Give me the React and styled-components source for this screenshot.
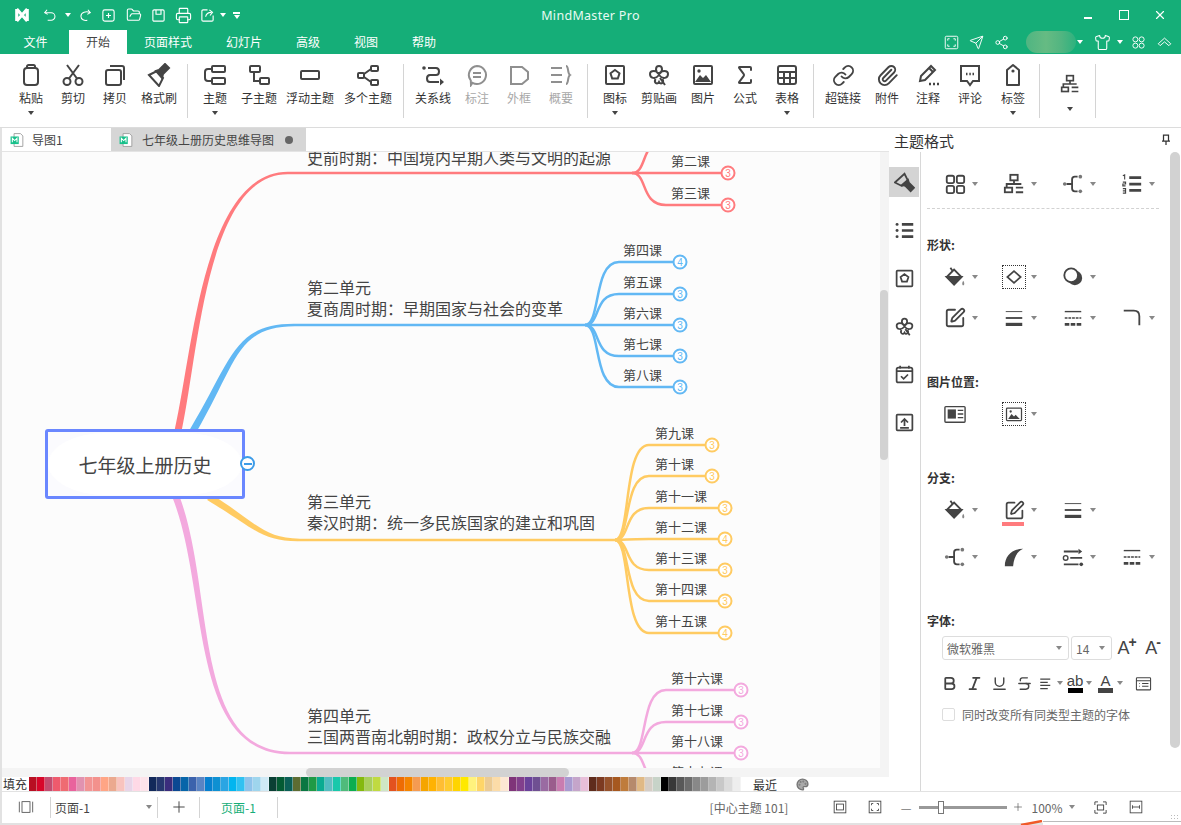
import React from "react"
import styled, { createGlobalStyle } from "styled-components"
import {
    Sigma, Link as LinkIcon, Send, Share2, Shirt,
    X, SquarePen, Bold, Italic, Underline, Strikethrough, Palette, Plus, Printer, FolderOpen, Paperclip,
} from "lucide-react"

const INK = "#444"
const GREEN = "#15ae78"
const FONT = `"Noto Sans CJK SC", "Liberation Sans", sans-serif`

const Global = createGlobalStyle`
html, body { margin: 0; padding: 0; overflow: hidden; background: #fff; }
body { font-family: ${FONT}; color: ${INK}; font-size: 12px; }
* { box-sizing: border-box; }
`

const Window = styled.div`
width: 1181px;
height: 825px;
display: flex;
flex-direction: column;
overflow: hidden;
`

const TitleBar = styled.div`
height: 30px;
background: ${GREEN};
color: #fff;
display: grid;
grid-template-columns: 1fr auto 1fr;
align-items: center;
`

const QuickTools = styled.div`
display: flex;
align-items: center;
padding-left: 12px;
`

const QuickBtn = styled.div`
width: ${p => p.$w || 25}px;
margin-left: ${p => p.$ml || 0}px;
display: flex;
flex-direction: column;
gap: 1px;
align-items: center;
justify-content: center;
color: #fff;
`

const OverflowBar = styled.div`
width: 7px;
height: 2px;
background: #fff;
`

const AppTitle = styled.div`
font-size: 12.5px;
letter-spacing: 0.3px;
color: #e8fbf3;
font-family: "Noto Sans", sans-serif;
`

const WinControls = styled.div`
display: flex;
justify-content: flex-end;
align-items: center;
padding-right: 3px;
`

const WinBtn = styled.div`
width: 36px;
display: flex;
justify-content: center;
`

const MinBar = styled.div`
width: 8px;
height: 2px;
margin-top: 6px;
background: #fff;
`

const MaxBox = styled.div`
width: 10px;
height: 10px;
border: 1.5px solid #fff;
`

const MenuBar = styled.div`
height: 24px;
background: ${GREEN};
display: flex;
padding-left: 2px;
color: #fff;
`

const MenuTab = styled.div`
width: ${p => p.$w || 58}px;
text-align: center;
line-height: 24px;
font-size: 12px;
background: ${p => (p.$active ? "#fff" : "transparent")};
color: ${p => (p.$active ? INK : "#fff")};
`

const MenuRight = styled.div`
margin-left: auto;
padding-right: 6px;
display: flex;
align-items: center;
`

const BlurName = styled.div`
width: 50px;
height: 22px;
margin: 0 1px 0 12px;
border-radius: 11px;
background: linear-gradient(90deg, #4fb582, #66bb83 40%, #52b581 70%, #2eb17e);
`

const Caret = styled.span`
display: inline-block;
width: 0;
height: 0;
border-left: 3.5px solid transparent;
border-right: 3.5px solid transparent;
border-top: 4px solid ${p => p.$color || INK};
`

const Ribbon = styled.div`
height: 74px;
display: flex;
align-items: flex-start;
background: #fff;
padding-left: 10px;
border-bottom: 1px solid #dcdcdc;
`

const ToolBtn = styled.div`
width: ${p => p.$w || 42}px;
height: 64px;
padding-top: 9px;
display: flex;
flex-direction: column;
align-items: center;
color: ${p => (p.$off ? "#8f8f8f" : INK)};
`

const ToolIcon = styled.div`
height: 24px;
display: flex;
align-items: center;
justify-content: center;
`

const ToolLabel = styled.div`
margin-top: 2px;
line-height: 18px;
font-size: 12px;
white-space: nowrap;
color: ${p => (p.$off ? "#a8a8a8" : "#333")};
`

const ToolArrow = styled.div`
line-height: 0;
margin-top: 3px;
`

const LayoutBtn = styled.div`
width: 48px;
height: 64px;
padding-top: 20px;
display: flex;
flex-direction: column;
align-items: center;
gap: 13px;
`

const RibbonSep = styled.div`
width: 1px;
height: 54px;
margin: 10px 6px 0 ${p => (p.$l === undefined ? 5 : p.$l)}px;
background: #d4d4d4;
`

const Workspace = styled.div`
height: 663px;
display: flex;
`

const LeftCol = styled.div`
width: 889px;
border-left: 2px solid #e2e2e2;
display: flex;
flex-direction: column;
`

const DocTabs = styled.div`
height: 24px;
display: flex;
border-bottom: 1px solid #e4e4e4;
`

const DocTab = styled.div`
width: ${p => p.$w}px;
height: 23px;
display: flex;
align-items: center;
gap: ${p => p.$gap}px;
padding-left: 8px;
background: ${p => (p.$active ? "#d6d6d6" : "#fff")};
color: #444;
font-size: 12px;
`

const DirtyDot = styled.span`
width: 8px;
height: 8px;
border-radius: 50%;
background: #666;
margin-left: 2px;
`

const CanvasRow = styled.div`
height: 625px;
display: flex;
`

const CanvasCol = styled.div`
width: 878px;
display: flex;
flex-direction: column;
`

const Canvas = styled.div`
position: relative;
height: 616px;
overflow: hidden;
background: #fcfcfc;
`

const MapLines = styled.svg`
position: absolute;
left: 0;
top: 0;
`

const CountText = styled.text`
font-family: "Liberation Sans", sans-serif;
font-size: 10px;
text-anchor: middle;
`

const Unit = styled.div`
position: absolute;
left: ${p => p.$x - 2}px;
top: ${p => p.$y - 152}px;
font-size: 16px;
line-height: 21px;
white-space: nowrap;
color: #444;
`

const Lesson = styled.div`
position: absolute;
left: ${p => p.$x - 2}px;
top: ${p => p.$y - 173}px;
font-size: 13px;
line-height: 18px;
white-space: nowrap;
color: #444;
`

const Central = styled.div`
position: absolute;
left: 43px;
top: 277px;
width: 200px;
height: 70px;
border: 3px solid #6a87ff;
border-radius: 3px;
background: #fbfbfe;
padding: 1px 0;
`

const CentralInner = styled.div`
height: 100%;
border-radius: 60px / 32px;
background: #fff;
display: flex;
align-items: center;
justify-content: center;
font-size: 19px;
color: #444;
`

const Collapse = styled.div`
position: absolute;
left: 238px;
top: 304px;
width: 15px;
height: 15px;
border-radius: 50%;
border: 2px solid #3d9ce8;
background: #fff;
display: flex;
align-items: center;
justify-content: center;
&::after {
    content: "";
    width: 8px;
    height: 2px;
    background: #3d9ce8;
}
`

const HScroll = styled.div`
height: 9px;
background: #f4f4f4;
padding-left: 304px;
`

const HThumb = styled.div`
width: 263px;
height: 9px;
border-radius: 5px;
background: #d2d2d2;
`

const VScroll = styled.div`
width: 9px;
background: #f4f4f4;
padding-top: 138px;
`

const VThumb = styled.div`
width: 8px;
height: 170px;
border-radius: 4px;
background: #d2d2d2;
`

const ColorStrip = styled.div`
height: 14px;
display: flex;
align-items: center;
background: #fff;
`

const FillLabel = styled.div`
width: 27px;
padding-left: 1px;
font-size: 12px;
line-height: 14px;
color: #333;
`

const Swatch = styled.div`
width: 8px;
height: 14px;
background: ${p => p.$c};
border-right: 1px solid rgba(255, 255, 255, 0.35);
`

const RecentLabel = styled.div`
margin-left: 12px;
width: 43px;
font-size: 12px;
color: #333;
`

const Panel = styled.div`
width: 292px;
display: flex;
flex-direction: column;
background: #fff;
`

const PanelHead = styled.div`
height: 24px;
display: flex;
align-items: center;
justify-content: space-between;
padding: 0 9px 0 5px;
font-size: 15px;
color: #333;
`

const PanelBody = styled.div`
height: 639px;
display: flex;
`

const Rail = styled.div`
width: 32px;
padding-top: 15px;
display: flex;
flex-direction: column;
gap: 18px;
border-right: 1px solid #d8d8d8;
`

const RailTab = styled.div`
width: 30px;
height: 30px;
display: flex;
align-items: center;
justify-content: center;
background: ${p => (p.$active ? "#d4d4d4" : "transparent")};
`

const Format = styled.div`
width: 249px;
padding: 17px 0 0 6px;
`

const FormatRow = styled.div`
height: 30px;
margin-top: ${p => p.$top || 0}px;
display: flex;
`

const FormatCell = styled.div`
width: 59px;
height: 30px;
padding-left: 16px;
display: flex;
align-items: center;
`

const CellIcon = styled.div`
position: relative;
width: 24px;
height: 24px;
display: flex;
align-items: center;
justify-content: center;
margin-right: 5px;
outline: ${p => (p.$dotted ? "1px dotted #333" : "none")};
outline-offset: -1px;
`

const ColorBar = styled.div`
position: absolute;
left: 0;
bottom: -4px;
width: 22px;
height: 4px;
background: ${p => p.$c};
`

const Dashes = styled.div`
width: 232px;
margin-top: 9px;
border-top: 1px dashed #d2d2d2;
`

const FormatLabel = styled.div`
height: 18px;
line-height: 18px;
margin-top: ${p => p.$top}px;
font-size: 12px;
font-weight: 700;
color: #333;
`

const FontRow = styled.div`
margin: 6px 0 0 15px;
display: flex;
align-items: center;
`

const Select = styled.div`
width: ${p => p.$w}px;
height: 24px;
margin-right: 2px;
padding: 0 6px 0 4px;
border: 1px solid #ddd;
border-radius: 3px;
display: flex;
align-items: center;
justify-content: space-between;
font-size: 12px;
color: #666;
`

const SizeBtn = styled.div`
width: 26px;
font-family: "Liberation Sans", sans-serif;
font-size: 18px;
line-height: 24px;
color: #444;
text-align: center;
white-space: nowrap;
sup {
    font-size: 14px;
    font-weight: 700;
    line-height: 0;
    margin-left: -1px;
}
`

const TextTools = styled.div`
height: 30px;
margin: 8px 0 0 9px;
display: flex;
align-items: center;
`

const TextTool = styled.div`
width: ${p => p.$w}px;
display: flex;
align-items: center;
justify-content: center;
gap: 3px;
`

const Barred = styled.div`
width: 16px;
display: flex;
flex-direction: column;
align-items: center;
font-family: "Liberation Sans", sans-serif;
font-size: 15px;
line-height: 14px;
color: #444;
&::after {
    content: "";
    width: 15px;
    height: 5px;
    background: ${p => p.$c};
}
`

const CheckRow = styled.div`
height: 18px;
margin: 7px 0 0 15px;
display: flex;
align-items: center;
gap: 7px;
font-size: 12px;
color: #666;
`

const CheckBox = styled.div`
width: 13px;
height: 13px;
border: 1px solid #ddd;
border-radius: 2px;
`

const PanelScroll = styled.div`
width: 11px;
`

const PanelThumb = styled.div`
width: 10px;
height: 596px;
border-radius: 5px;
background: #d2d2d2;
`

const StatusBar = styled.div`
height: 32px;
padding-bottom: 1px;
border-top: 1px solid #e2e2e2;
border-left: 2px solid #e2e2e2;
display: flex;
align-items: center;
`

const StatusCell = styled.div`
width: ${p => p.$w}px;
margin-left: ${p => p.$ml || 0}px;
display: flex;
align-items: center;
justify-content: ${p => p.$justify || "center"};
font-size: 12px;
color: ${p => p.$color || INK};
white-space: nowrap;
`

const PageSelect = styled(StatusCell)`
padding: 0 5px 0 4px;
`

const StatusSep = styled.div`
width: 1px;
height: 21px;
background: #d4d4d4;
`

const Spacer = styled.div`
flex: 1;
`

const Slider = styled.div`
position: relative;
width: 88px;
height: 3px;
margin-left: 7px;
background: #999;
`

const SliderThumb = styled.div`
position: absolute;
left: 19px;
top: -5px;
width: 6px;
height: 13px;
background: #fff;
border: 1px solid #777;
`

const Footer = styled.div`
position: relative;
height: 2px;
background: #e2e2e2;
`

const Squiggle = styled.svg`
position: absolute;
left: 1020px;
top: -3px;
`

const FooterEdge = styled.div`
position: absolute;
left: 1043px;
top: -2px;
width: 138px;
height: 4px;
background: #fff;
border-top: 1px solid #bbb;
`

const Grip = styled.div`
position: absolute;
right: 2px;
top: -9px;
width: 9px;
height: 9px;
background: radial-gradient(circle, #bbb 1px, transparent 1px) 0 0 / 3px 3px;
`

const Ico = styled.svg.attrs(p => ({
    viewBox: "0 0 24 24",
    width: p.$s || 24,
    height: p.$s || 24,
    fill: "none",
    stroke: "currentColor",
    strokeWidth: p.$sw || 2,
}))`
display: block;
flex-shrink: 0;
color: ${p => p.$color || "currentColor"};
`

const brushShape = <>
    <path d="M2 12l8-4 6 7-4 8z"/>
    <path d="M9 8l3-1 6-6 4 4-6 6-1 4z" fill="currentColor"/>
</>

const icons = {
    paste: <><rect x="5" y="5" width="14" height="17" rx="3"/><path d="M8 5V3.500C8 2.700 8.700 2 9.500 2h5c.8 0 1.500.7 1.500 1.500V5"/></>,
    scissors: <><circle cx="6" cy="18.500" r="3.500"/><circle cx="18" cy="18.500" r="3.500"/><path d="M8 15.500L18 2M16 15.500L6 2"/></>,
    copy: <><rect x="3" y="7" width="15" height="15" rx="2"/><path d="M7 3h12a2 2 0 0 1 2 2v12"/></>,
    brush: brushShape,
    railBrush: <g transform="rotate(90 12 12)">{brushShape}</g>,
    topic: <><rect x="9" y="3" width="13" height="6" rx="1"/><rect x="9" y="15" width="13" height="6" rx="1"/><path d="M9 6H5Q2 6 2 9v6q0 3 3 3h4"/></>,
    sub: <><rect x="3" y="3" width="10" height="6" rx="1"/><rect x="13" y="15" width="9" height="6" rx="1"/><path d="M7 9v9h6"/></>,
    float: <rect x="3" y="8" width="18" height="8" rx="1"/>,
    multi: <><rect x="2" y="10" width="6" height="5" rx="1"/><rect x="15" y="3" width="7" height="5" rx="1"/><rect x="15" y="17" width="7" height="5" rx="1"/><path d="M8 11l7-5M8 14l7 5"/></>,
    relation: <><circle cx="3" cy="5" r="1.800" fill="currentColor" stroke="none"/><path d="M7 5h8c4 0 4 7 0 7H9c-4 0-4 7 0 7h9"/><path d="M19 15.500l4 3.500-4 3.500z" fill="currentColor" stroke="none"/></>,
    callout: <><path d="M12 3a9 9 0 1 1-4.500 16.800L6 22l-.2-4.500A9 9 0 0 1 12 3z"/><path d="M8 10h8M8 14h8"/></>,
    frame: <path d="M4 4h11l6 5v7l-6 5H4z"/>,
    summary: <><path d="M2 5h11M2 12h11M2 19h11"/><path d="M17 3c3 0 1 7 4 9-3 2-1 9-4 9"/></>,
    badge: <><rect x="3" y="3" width="18" height="18" rx="1"/><path d="M12 7l4.500 3.300-1.700 5.200H9.200l-1.700-5.200z"/></>,
    clover: <><path d="M12 11C8 9 8 3 12 3s4 6 0 8zM12 11c-2-4-9-4-9 0s5 6 9 1M12 11c2-4 9-4 9 0s-5 6-9 1M8.500 16c-2 4 2 6 3.500 3 1.500 3 5.500 1 3.500-3"/><path d="M13 15l5 7"/></>,
    picture: <><rect x="3" y="3" width="18" height="18" rx="1"/><circle cx="8" cy="8" r="1.700" fill="currentColor" stroke="none"/><path d="M4 19l5-7 3 3 3-3 5 7z" fill="currentColor" stroke="none"/></>,
    table: <><rect x="3" y="3" width="18" height="18" rx="2"/><path d="M3 9h18M3 15h18M9 9v12M15 9v12"/></>,
    note: <><path d="M4 18l1-5L15 3l4 4L9 17z"/><path d="M13 5l4 4"/><path d="M13 21h2M17 21h2M21 21h2" strokeWidth="2.500"/></>,
    comment: <><path d="M3 3h18v15h-6l-3 4-3-4H3z"/><path d="M8 11h1.500M11.300 11h1.500M14.500 11H16" strokeWidth="2.500"/></>,
    tag: <><path d="M6 22V7l6-5 6 5v15z" strokeLinejoin="round"/><circle cx="12" cy="8" r="1.600" fill="currentColor" stroke="none"/></>,
    org: <><rect x="8" y="2" width="8" height="6"/><rect x="2" y="16" width="8" height="5"/><path d="M12 8v4M4 16v-4h16M14 16h8M14 21h8"/></>,
    grid4: <><rect x="3" y="3" width="8" height="8" rx="2"/><rect x="14" y="3" width="8" height="8" rx="2"/><rect x="3" y="14" width="8" height="8" rx="2"/><rect x="14" y="14" width="8" height="8" rx="2"/></>,
    bracket: <><circle cx="3" cy="12" r="2" fill="#777" stroke="none"/><circle cx="20" cy="4" r="2" fill="#777" stroke="none"/><circle cx="20" cy="20" r="2" fill="#777" stroke="none"/><path d="M5 12h5M17 4h-3q-3 0-3 3v10q0 3 3 3h3"/></>,
    numbered: <><path d="M9 5h13M9 12h13M9 19h13" strokeWidth="3"/><path d="M2 3l2-1v5M2 10h3v2H2v2h3M2 17h3v5H2M2 19.500h3" strokeWidth="1.200"/></>,
    fill: <><path d="M7 2l2 3M3 12l8-8 8 8-8 8z"/><path d="M3 12h16l-8 8z" fill="currentColor"/><path d="M21 16c1.500 2 1.500 5 0 5s-1.500-3 0-5z" fill="#888" stroke="none"/></>,
    diamond: <path d="M12 5l8 7-8 7-8-7z"/>,
    shadow: <><circle cx="14" cy="13" r="8" fill="currentColor" stroke="none"/><circle cx="10" cy="10" r="7.500" fill="#fff"/></>,
    lines: <><path d="M3 5h18" strokeWidth="1"/><path d="M3 12h18" strokeWidth="2"/><path d="M3 19h18" strokeWidth="3.500"/></>,
    dashes: <><path d="M3 5h18" strokeWidth="1.500"/><path d="M3 12h18" strokeWidth="1.500" strokeDasharray="3 1"/><path d="M3 19h18" strokeWidth="3" strokeDasharray="5 1.500"/></>,
    corner: <path d="M3 4h11q6 0 6 6v10"/>,
    imgText: <><rect x="1" y="4" width="22" height="17" rx="1"/><rect x="4" y="7" width="9" height="10" fill="currentColor" stroke="none"/><path d="M15 8h6M15 12h6M15 16h6" strokeWidth="1.500"/></>,
    imgSmall: <><rect x="3" y="5" width="18" height="15" rx="1"/><path d="M5 18l4-6 3 3 2-2 5 5z" fill="currentColor" stroke="none"/><circle cx="8" cy="9" r="1.400" fill="currentColor" stroke="none"/></>,
    curve: <path d="M2 22C2 11 10 3 22 3 15 6 12 13 11 22z" fill="currentColor" stroke="none"/>,
    branchStyle: <><path d="M2 6h16M9 13h13M2 20h16" strokeWidth="2"/><circle cx="4" cy="13" r="2.500" strokeWidth="1.500"/><path d="M18 3l4 3-4 3z" fill="currentColor" stroke="none"/><circle cx="21" cy="20" r="2" fill="currentColor" stroke="none"/></>,
    list: <><path d="M9 5h13M9 12h13M9 19h13" strokeWidth="3"/><circle cx="3.500" cy="5" r="1.700" fill="currentColor" stroke="none"/><circle cx="3.500" cy="12" r="1.700" fill="currentColor" stroke="none"/><circle cx="3.500" cy="19" r="1.700" fill="currentColor" stroke="none"/></>,
    calendar: <><rect x="3" y="4" width="18" height="17" rx="2"/><path d="M3 8h18M7 2v3M17 2v3"/><path d="M8 14l3 3 5-5"/></>,
    upload: <><rect x="3" y="3" width="18" height="18" rx="1"/><path d="M12 16V8M8 12l4-4 4 4M7 18h10"/></>,
    align: <path d="M2 5h16M2 10h12M2 15h16M2 20h12" strokeWidth="2"/>,
    note2: <><rect x="2" y="4" width="20" height="17" rx="1" strokeWidth="1.500"/><path d="M2 8h20M6 12h1M10 12h9M6 16h1M10 16h9" strokeWidth="1.500"/></>,
    logo: <path d="M5 4v16M19 4v16M5 4l14 16M19 4L5 20" strokeWidth="4.200" strokeLinejoin="round"/>,
    undo: <><path d="M7 3L3 8l5 3"/><path d="M3 8h11a6 6 0 0 1 0 13H8"/></>,
    redo: <><path d="M17 3l4 5-5 3"/><path d="M21 8c-7-3-16-1-16 6 0 6 6 8 11 7"/></>,
    add: <><rect x="3" y="3" width="18" height="18" rx="3"/><path d="M12 8v8M8 12h8"/></>,
    save: <><rect x="3" y="3" width="18" height="18" rx="2"/><path d="M8 3v7h8V3"/></>,
    shareBox: <><path d="M12 3H5a2 2 0 0 0-2 2v14a2 2 0 0 0 2 2h14a2 2 0 0 0 2-2v-7"/><path d="M9 14c1-5 5-7 9-7M15 3l5 4-4 5"/></>,
    fullscreen: <><rect x="2" y="2" width="20" height="20" rx="2"/><path d="M6 9V6h3M18 9V6h-3M6 15v3h3M18 15v3h-3"/></>,
    apps: <><circle cx="7" cy="7" r="4"/><circle cx="17" cy="7" r="4"/><circle cx="7" cy="17" r="4"/><circle cx="17" cy="17" r="4"/></>,
    collapseUp: <path d="M2 14L12 5l10 9-3 3-7-6-7 6z" strokeLinejoin="round"/>,
    pin: <path d="M7 2h10v12H7zM4 14h16M12 14v8"/>,
    pages: <><rect x="6" y="4" width="12" height="16"/><path d="M2 4v16M22 4v16"/></>,
    fit: <><rect x="2" y="2" width="20" height="20"/><rect x="6" y="7" width="12" height="10"/></>,
    fitAll: <><rect x="2" y="2" width="20" height="20"/><path d="M6 9V6h3M18 9V6h-3M6 15v3h3M18 15v3h-3"/></>,
    focus: <><path d="M8 3H3v5M16 3h5v5M8 21H3v-5M16 21h5v-5"/><rect x="7" y="8" width="10" height="8"/></>,
    fitWidth: <><rect x="2" y="2" width="20" height="20"/><path d="M6 12h12M6 9v6M18 9v6" strokeWidth="1.500"/></>,
    doc: <><path d="M7 1h11l4 4v18H7z" stroke="#999" strokeWidth="1.500" fill="#fff"/><rect x="1" y="6" width="14" height="13" fill="#16c08a" stroke="none"/><path d="M4 16V9l4 4 4-4v7" stroke="#fff" strokeWidth="1.800"/></>,
}

const Icon = ({ name, s, sw }) => (
    <Ico $s={s} $sw={sw}>{icons[name]}</Ico>
)

const clipboardTools = [
    { label: "粘贴", icon: <Icon name="paste"/>, arrow: true },
    { label: "剪切", icon: <Icon name="scissors"/> },
    { label: "拷贝", icon: <Icon name="copy"/> },
    { label: "格式刷", icon: <Icon name="brush"/>, w: 46 },
]

const topicTools = [
    { label: "主题", icon: <Icon name="topic"/>, arrow: true },
    { label: "子主题", icon: <Icon name="sub"/>, w: 46 },
    { label: "浮动主题", icon: <Icon name="float"/>, w: 56 },
    { label: "多个主题", icon: <Icon name="multi"/>, w: 60 },
]

const relationTools = [
    { label: "关系线", icon: <Icon name="relation"/>, w: 46 },
    { label: "标注", icon: <Icon name="callout"/>, off: true },
    { label: "外框", icon: <Icon name="frame"/>, off: true },
    { label: "概要", icon: <Icon name="summary"/>, off: true },
]

const insertTools = [
    { label: "图标", icon: <Icon name="badge"/>, arrow: true },
    { label: "剪贴画", icon: <Icon name="clover"/>, w: 46 },
    { label: "图片", icon: <Icon name="picture"/> },
    { label: "公式", icon: <Sigma size={24} strokeWidth={2}/> },
    { label: "表格", icon: <Icon name="table"/>, arrow: true },
]

const linkTools = [
    { label: "超链接", icon: <LinkIcon size={23} strokeWidth={2}/>, w: 46 },
    { label: "附件", icon: <Paperclip size={23} strokeWidth={2}/> },
    { label: "注释", icon: <Icon name="note"/>, w: 40 },
    { label: "评论", icon: <Icon name="comment"/>, w: 44 },
    { label: "标签", icon: <Icon name="tag"/>, arrow: true },
]

const ToolGroup = ({ tools }) => tools.map(t => (
    <ToolBtn key={t.label} $w={t.w} $off={t.off}>
        <ToolIcon>{t.icon}</ToolIcon>
        <ToolLabel $off={t.off}>{t.label}</ToolLabel>
        {t.arrow && <ToolArrow><Caret/></ToolArrow>}
    </ToolBtn>
))

const swatches = [
    "#b80f22", "#d7062a", "#c34c6f", "#ee5a6d", "#ef6b72", "#e9639d", "#e192b0", "#f29494", "#f3918c", "#ffa585", "#eba98f", "#f8c3be", "#e8d5e8", "#fed9e6", "#fde3ea",
    "#12295a", "#26376f", "#3b2d7d", "#0b4892", "#0665a9", "#3b62ac", "#5a84c4", "#0780cf", "#0e90d2", "#2aa5e3", "#02b5ef", "#31c1f1", "#8ec3eb", "#9ed5ed", "#cfe9f5",
    "#0a3f34", "#035a33", "#0a5f56", "#5d6c32", "#0a7742", "#1f9a45", "#0aab92", "#52bcc1", "#19c8ab", "#4fbb7b", "#0cae50", "#84b90e", "#a9cf5b", "#c0da41", "#cfe6c5",
    "#e3521f", "#ee6c04", "#f48400", "#f59b52", "#f5a500", "#ffb202", "#ffbd33", "#ffcb2f", "#ffd400", "#ffe900", "#fff27d", "#fed568", "#eccb93", "#fcdca8", "#fde7d3",
    "#7f3479", "#823f8c", "#6a429a", "#6f5092", "#9a6ba2", "#9a5c8c", "#c97cb0", "#a99ad0", "#c5a5ca", "#e8bfd9",
    "#5f2c1c", "#7c3a21", "#97522b", "#a6581f", "#bf7c3c", "#b68a6c", "#e0b985", "#d5cdc5", "#c7d3c8",
    "#000000", "#383838", "#585858", "#6c6c6c", "#888888", "#9c9c9c", "#b4b4b4", "#c8c8c8", "#dcdcdc", "#eeeeee",
]

// mind map, all coordinates are page pixels
const branches = [
    {
        color: "#ff7b7e",
        root: [178, 431, 196, 350, 205, 173, 288, 173],
        hub: [632, 173],
        kids: [
            { y: 140, cx: 670 },
            { name: "第二课", x: 671, y: 173, cx: 728, n: 3 },
            { name: "第三课", x: 671, y: 205, cx: 728, n: 3 },
        ],
    },
    {
        color: "#62b8f4",
        root: [193, 431, 235, 360, 235, 325, 295, 325],
        hub: [585, 325],
        kids: [
            { name: "第四课", x: 623, y: 262, cx: 680, n: 4 },
            { name: "第五课", x: 623, y: 294, cx: 680, n: 3 },
            { name: "第六课", x: 623, y: 325, cx: 680, n: 3 },
            { name: "第七课", x: 623, y: 356, cx: 680, n: 3 },
            { name: "第八课", x: 623, y: 387, cx: 680, n: 3 },
        ],
    },
    {
        color: "#ffcb62",
        root: [209, 497, 255, 525, 262, 540, 300, 540],
        hub: [615, 540],
        kids: [
            { name: "第九课", x: 655, y: 445, cx: 712, n: 3 },
            { name: "第十课", x: 655, y: 476, cx: 712, n: 3 },
            { name: "第十一课", x: 655, y: 508, cx: 725, n: 3 },
            { name: "第十二课", x: 655, y: 539, cx: 725, n: 4 },
            { name: "第十三课", x: 655, y: 570, cx: 725, n: 3 },
            { name: "第十四课", x: 655, y: 601, cx: 725, n: 3 },
            { name: "第十五课", x: 655, y: 633, cx: 725, n: 4 },
        ],
    },
    {
        color: "#f3a9de",
        root: [176, 497, 212, 590, 190, 753, 290, 753],
        hub: [632, 753],
        kids: [
            { name: "第十六课", x: 671, y: 690, cx: 741, n: 3 },
            { name: "第十七课", x: 671, y: 722, cx: 741, n: 3 },
            { name: "第十八课", x: 671, y: 753, cx: 741, n: 3 },
            { name: "第十九课", x: 671, y: 784, cx: 741 },
        ],
    },
]

const units = [
    { y: 147, lines: ["史前时期：中国境内早期人类与文明的起源"] },
    { y: 277, lines: ["第二单元", "夏商周时期：早期国家与社会的变革"] },
    { y: 491, lines: ["第三单元", "秦汉时期：统一多民族国家的建立和巩固"] },
    { y: 705, lines: ["第四单元", "三国两晋南北朝时期：政权分立与民族交融"] },
]

// the root branch gets thinner from the centre topic to the unit topic
const taper = ([x0, y0, x1, y1, x2, y2, x3, y3]) => {
    const normal = (ax, ay, bx, by, w) => {
        const len = Math.hypot(bx - ax, by - ay)
        return [(by - ay) / len * w, (ax - bx) / len * w]
    }
    const [n0x, n0y] = normal(x0, y0, x1, y1, 3.5)
    const [n1x, n1y] = normal(x0, y0, x2, y2, 3)
    const [n2x, n2y] = normal(x1, y1, x3, y3, 2)
    const [n3x, n3y] = normal(x2, y2, x3, y3, 1.25)
    return (
        `M${x0 + n0x},${y0 + n0y} ` +
        `C${x1 + n1x},${y1 + n1y} ${x2 + n2x},${y2 + n2y} ${x3 + n3x},${y3 + n3y} ` +
        `L${x3 - n3x},${y3 - n3y} ` +
        `C${x2 - n2x},${y2 - n2y} ${x1 - n1x},${y1 - n1y} ${x0 - n0x},${y0 - n0y} Z`
    )
}

const Branch = ({ b }) => {
    const [hx, hy] = b.hub
    return (
        <g>
            <path d={taper(b.root)} fill={b.color}/>
            <path d={`M${b.root[6]},${hy} H${hx}`} stroke={b.color} strokeWidth="2.500"/>
            {b.kids.map(k => (
                <g key={k.y}>
                    <path
                        d={`M${hx},${hy} C${hx + 16},${hy} ${hx + 8},${k.y} ${hx + 34},${k.y} H${k.cx - 7}`}
                        fill="none"
                        stroke={b.color}
                        strokeWidth="2.500"
                    />
                    {k.n && (
                        <>
                            <circle cx={k.cx} cy={k.y} r="6.500" fill="#fff" stroke={b.color} strokeWidth="2"/>
                            <CountText x={k.cx} y={k.y + 3.5} fill={b.color}>{k.n}</CountText>
                        </>
                    )}
                </g>
            ))}
        </g>
    )
}

const Cell = ({ name, dotted, bar, sw, children }) => (
    <FormatCell>
        <CellIcon $dotted={dotted}>
            {children || <Icon name={name} s={dotted ? 20 : 22} sw={sw}/>}
            {bar && <ColorBar $c={bar}/>}
        </CellIcon>
        <Caret $color="#888"/>
    </FormatCell>
)

const MindMap = () => (
    <Canvas>
        <MapLines width="878" height="616" viewBox="2 152 878 616">
            {branches.map(b => <Branch key={b.color} b={b}/>)}
        </MapLines>
        {units.map(u => (
            <Unit key={u.y} $x={307} $y={u.y}>
                {u.lines.map(l => <div key={l}>{l}</div>)}
            </Unit>
        ))}
        {branches.flatMap(b => b.kids.filter(k => k.name).map(k => (
            <Lesson key={k.name} $x={k.x} $y={k.y}>{k.name}</Lesson>
        )))}
        <Central><CentralInner>七年级上册历史</CentralInner></Central>
        <Collapse/>
    </Canvas>
)

const FormatPanel = () => (
    <Panel>
        <PanelHead>
            主题格式
            <Icon name="pin" s={12} sw={2.500}/>
        </PanelHead>
        <PanelBody>
            <Rail>
                <RailTab $active><Icon name="railBrush" s={21}/></RailTab>
                <RailTab><Icon name="list" s={21}/></RailTab>
                <RailTab><Icon name="badge" s={21}/></RailTab>
                <RailTab><Icon name="clover" s={21}/></RailTab>
                <RailTab><Icon name="calendar" s={21}/></RailTab>
                <RailTab><Icon name="upload" s={21}/></RailTab>
            </Rail>
            <Format>
                <FormatRow>
                    <Cell name="grid4"/>
                    <Cell name="org"/>
                    <Cell name="bracket"/>
                    <Cell name="numbered"/>
                </FormatRow>
                <Dashes/>

                <FormatLabel $top={27}>形状:</FormatLabel>
                <FormatRow $top={8}>
                    <Cell name="fill"/>
                    <Cell name="diamond" dotted/>
                    <Cell name="shadow"/>
                </FormatRow>
                <FormatRow $top={11}>
                    <Cell><SquarePen size={22} strokeWidth={2}/></Cell>
                    <Cell name="lines"/>
                    <Cell name="dashes"/>
                    <Cell name="corner"/>
                </FormatRow>

                <FormatLabel $top={40}>图片位置:</FormatLabel>
                <FormatRow $top={8}>
                    <FormatCell><CellIcon><Icon name="imgText" s={22} sw={1.500}/></CellIcon></FormatCell>
                    <Cell name="imgSmall" dotted sw={1.500}/>
                </FormatRow>

                <FormatLabel $top={40}>分支:</FormatLabel>
                <FormatRow $top={8}>
                    <Cell name="fill"/>
                    <Cell bar="#ff7b7e"><SquarePen size={21} strokeWidth={2}/></Cell>
                    <Cell name="lines"/>
                </FormatRow>
                <FormatRow $top={17}>
                    <Cell name="bracket"/>
                    <Cell name="curve"/>
                    <Cell name="branchStyle"/>
                    <Cell name="dashes"/>
                </FormatRow>

                <FormatLabel $top={40}>字体:</FormatLabel>
                <FontRow>
                    <Select $w={127}>微软雅黑<Caret $color="#888"/></Select>
                    <Select $w={41}>14<Caret $color="#888"/></Select>
                    <SizeBtn>A<sup>+</sup></SizeBtn>
                    <SizeBtn>A<sup>-</sup></SizeBtn>
                </FontRow>
                <TextTools>
                    <TextTool $w={26}><Bold size={17} strokeWidth={2.5}/></TextTool>
                    <TextTool $w={25}><Italic size={17} strokeWidth={2.5}/></TextTool>
                    <TextTool $w={24}><Underline size={17} strokeWidth={2}/></TextTool>
                    <TextTool $w={26}><Strikethrough size={17} strokeWidth={2}/></TextTool>
                    <TextTool $w={28}><Icon name="align" s={15}/><Caret $color="#888"/></TextTool>
                    <TextTool $w={29}><Barred $c="#000">ab</Barred><Caret $color="#888"/></TextTool>
                    <TextTool $w={32}><Barred $c="#444">A</Barred><Caret $color="#888"/></TextTool>
                    <TextTool $w={34}><Icon name="note2" s={17}/></TextTool>
                </TextTools>
                <CheckRow><CheckBox/>同时改变所有同类型主题的字体</CheckRow>
            </Format>
            <PanelScroll><PanelThumb/></PanelScroll>
        </PanelBody>
    </Panel>
)

const App = () => (
    <Window>
        <Global/>
        <TitleBar>
            <QuickTools>
                <QuickBtn $w={19}><Icon name="logo" s={18}/></QuickBtn>
                <QuickBtn $w={24} $ml={7}><Icon name="undo" s={14} sw={1.8}/></QuickBtn>
                <QuickBtn $w={12}><Caret $color="#fff"/></QuickBtn>
                <QuickBtn $w={22}><Icon name="redo" s={14} sw={1.8}/></QuickBtn>
                <QuickBtn><Icon name="add" s={15} sw={1.8}/></QuickBtn>
                <QuickBtn><FolderOpen size={16} strokeWidth={1.6}/></QuickBtn>
                <QuickBtn><Icon name="save" s={15} sw={1.8}/></QuickBtn>
                <QuickBtn><Printer size={17} strokeWidth={1.6}/></QuickBtn>
                <QuickBtn $w={23}><Icon name="shareBox" s={15} sw={1.8}/></QuickBtn>
                <QuickBtn $w={8}><Caret $color="#fff"/></QuickBtn>
                <QuickBtn $w={19}><OverflowBar/><Caret $color="#fff"/></QuickBtn>
            </QuickTools>
            <AppTitle>MindMaster Pro</AppTitle>
            <WinControls>
                <WinBtn><MinBar/></WinBtn>
                <WinBtn><MaxBox/></WinBtn>
                <WinBtn><X size={14} strokeWidth={2}/></WinBtn>
            </WinControls>
        </TitleBar>

        <MenuBar>
            <MenuTab $w={67}>文件</MenuTab>
            <MenuTab $active>开始</MenuTab>
            <MenuTab $w={82}>页面样式</MenuTab>
            <MenuTab $w={70}>幻灯片</MenuTab>
            <MenuTab>高级</MenuTab>
            <MenuTab>视图</MenuTab>
            <MenuTab>帮助</MenuTab>
            <MenuRight>
                <QuickBtn><Icon name="fullscreen" s={15} sw={1.5}/></QuickBtn>
                <QuickBtn><Send size={15} strokeWidth={1.5}/></QuickBtn>
                <QuickBtn><Share2 size={15} strokeWidth={1.5}/></QuickBtn>
                <BlurName/>
                <Caret $color="#fff"/>
                <QuickBtn $w={30} $ml={4}><Shirt size={17} strokeWidth={1.5}/></QuickBtn>
                <Caret $color="#fff"/>
                <QuickBtn $w={30}><Icon name="apps" s={15} sw={1.5}/></QuickBtn>
                <QuickBtn $w={22}><Icon name="collapseUp" s={15} sw={1.5}/></QuickBtn>
            </MenuRight>
        </MenuBar>

        <Ribbon>
            <ToolGroup tools={clipboardTools}/>
            <RibbonSep/>
            <ToolGroup tools={topicTools}/>
            <RibbonSep/>
            <ToolGroup tools={relationTools}/>
            <RibbonSep/>
            <ToolGroup tools={insertTools}/>
            <RibbonSep/>
            <ToolGroup tools={linkTools}/>
            <RibbonSep/>
            <LayoutBtn>
                <Icon name="org" s={20}/>
                <Caret/>
            </LayoutBtn>
            <RibbonSep $l={1}/>
        </Ribbon>

        <Workspace>
            <LeftCol>
                <DocTabs>
                    <DocTab $w={109} $gap={8}><Icon name="doc" s={14}/>导图1</DocTab>
                    <DocTab $w={195} $gap={9} $active>
                        <Icon name="doc" s={14}/>
                        七年级上册历史思维导图
                        <DirtyDot/>
                    </DocTab>
                </DocTabs>
                <CanvasRow>
                    <CanvasCol>
                        <MindMap/>
                        <HScroll><HThumb/></HScroll>
                    </CanvasCol>
                    <VScroll><VThumb/></VScroll>
                </CanvasRow>
                <ColorStrip>
                    <FillLabel>填充</FillLabel>
                    {swatches.map(c => <Swatch key={c} $c={c}/>)}
                    <RecentLabel>最近</RecentLabel>
                    <Palette size={13} color="#777" fill="#aaa" strokeWidth={2.5}/>
                </ColorStrip>
            </LeftCol>
            <FormatPanel/>
        </Workspace>

        <StatusBar>
            <StatusCell $w={48}><Icon name="pages" s={16} sw={1.2}/></StatusCell>
            <StatusSep/>
            <PageSelect $w={106} $justify="space-between">
                页面-1<Caret $color="#888"/>
            </PageSelect>
            <StatusSep/>
            <StatusCell $w={41}><Plus size={18} strokeWidth={1.3}/></StatusCell>
            <StatusSep/>
            <StatusCell $w={77} $color={GREEN}>页面-1</StatusCell>
            <StatusSep/>
            <Spacer/>
            <StatusCell $w={82} $color="#666">[中心主题 101]</StatusCell>
            <StatusCell $w={18} $ml={41}><Icon name="fit" s={14} sw={1.5}/></StatusCell>
            <StatusCell $w={18} $ml={17}><Icon name="fitAll" s={14} sw={1.5}/></StatusCell>
            <StatusCell $w={12} $ml={16} $color="#777">—</StatusCell>
            <Slider><SliderThumb/></Slider>
            <StatusCell $w={12} $ml={5}><Plus size={14} strokeWidth={1.2}/></StatusCell>
            <StatusCell $w={34} $ml={6} $color="#666">100%</StatusCell>
            <StatusCell $w={10} $ml={3}><Caret $color="#888"/></StatusCell>
            <StatusCell $w={16} $ml={15}><Icon name="focus" s={15} sw={1.5}/></StatusCell>
            <StatusCell $w={16} $ml={20}><Icon name="fitWidth" s={14} sw={1.5}/></StatusCell>
            <StatusCell $w={37}/>
        </StatusBar>
        <Footer>
            <FooterEdge/>
            <Grip/>
            <Squiggle width="26" height="6">
                <path d="M1 5L22 1" stroke="#f05a28" strokeWidth="2.5" fill="none"/>
            </Squiggle>
        </Footer>
    </Window>
)

export default App
